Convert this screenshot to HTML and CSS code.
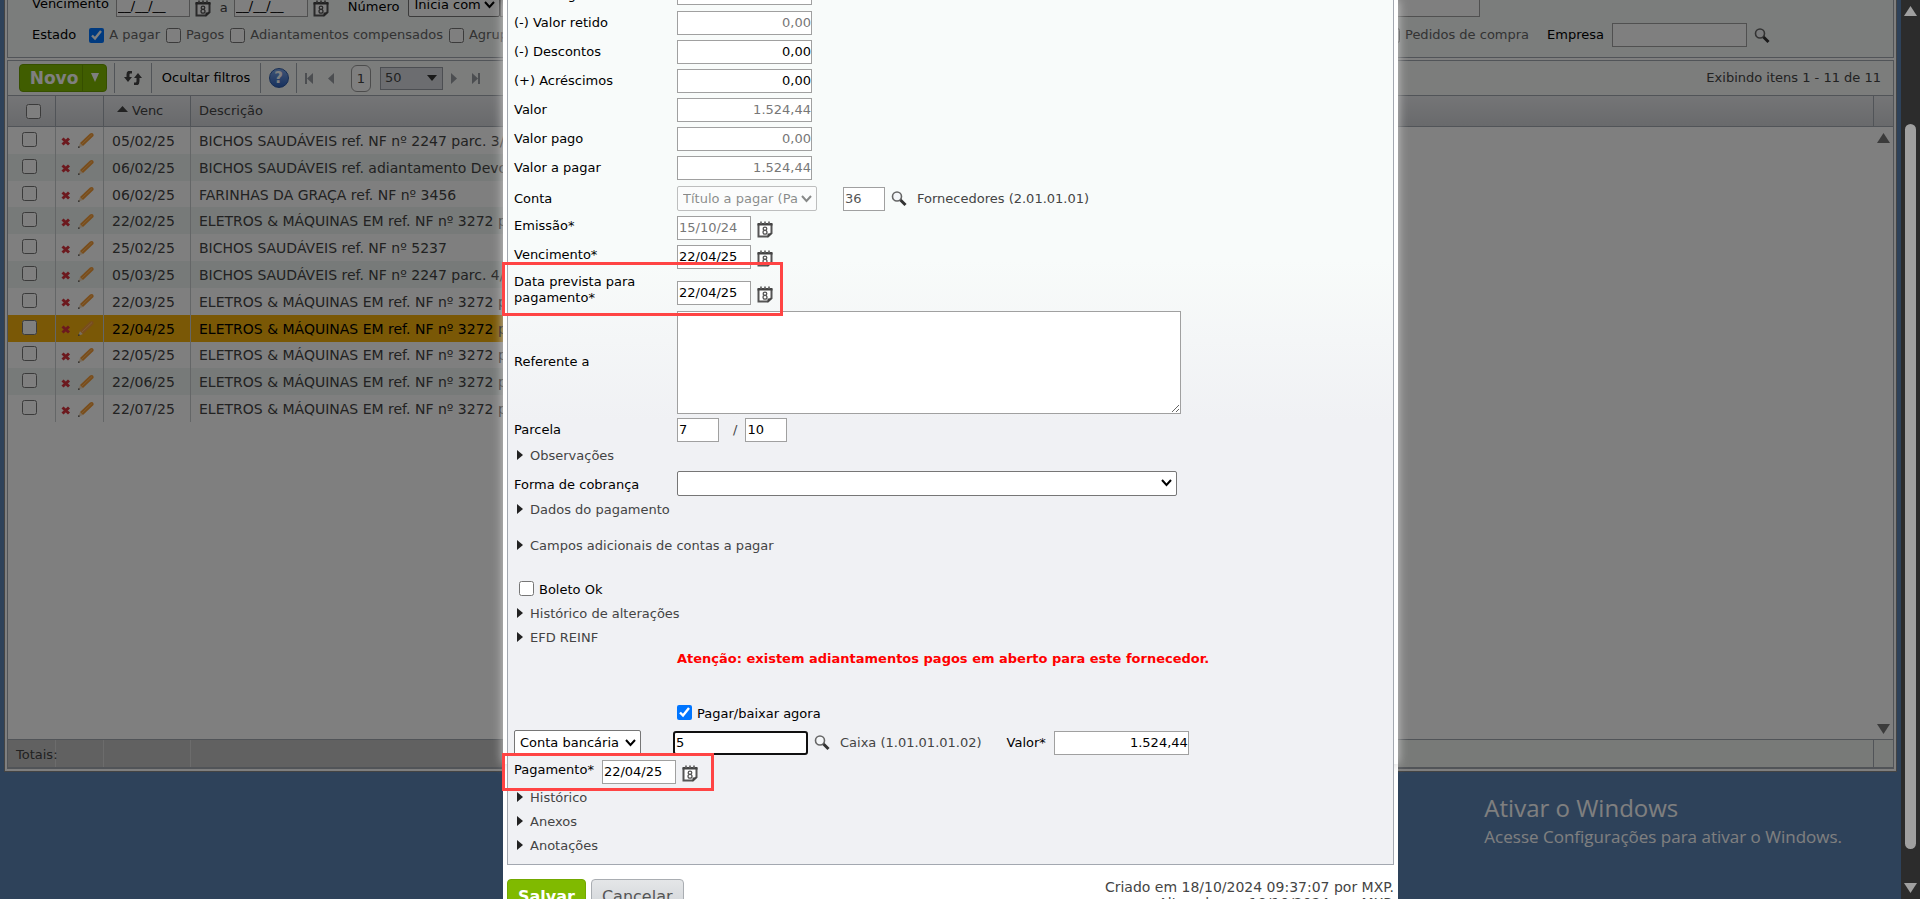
FILE: index.html
```html
<!DOCTYPE html>
<html lang="pt-BR">
<head>
    <meta charset="UTF-8">
    <meta name="viewport" content="width=device-width, initial-scale=1.0">
    <title>Contas a pagar</title>
    <link rel="stylesheet" href="styles.css">
</head>
<body>
    <svg class="sprite" aria-hidden="true">
        <symbol id="calendar" viewBox="0 0 16 17">
            <path d="M1.500 3v12.500h9.500l3.500-3.500V3" fill="#fff" stroke="#555" stroke-width="2"/>
            <path d="M0.500 2h15v2.500h-15zM10.500 16.500v-4h5z" fill="#444"/>
            <path d="M3 0.500h2v2H3zM7 0.500h2v2H7zM11 0.500h2v2h-2z" fill="#777"/>
            <ellipse cx="8" cy="7.700" rx="1.800" ry="1.600" fill="none" stroke="#555" stroke-width="1.300"/>
            <ellipse cx="8" cy="11.300" rx="2" ry="1.900" fill="none" stroke="#555" stroke-width="1.300"/>
        </symbol>
        <symbol id="search" viewBox="0 0 16 16">
            <circle cx="6" cy="6" r="4.500" fill="#f4f6f8" stroke="#666" stroke-width="1.600"/>
            <path d="M9.500 9.500l5 5" stroke="#333" stroke-width="3"/>
        </symbol>
        <symbol id="remove" viewBox="0 0 10 9">
            <path d="M1.500 1.500l6.500 6M8 1.500l-6.500 6" stroke="#d8323c" stroke-width="3"/>
        </symbol>
        <symbol id="pencil" viewBox="0 0 18 17">
            <path d="M1 16l2-5 3 3z" fill="#f0d9bc"/>
            <path class="pencil-body" d="M3 11L13 1.500q2-1 3 0t.5 2.500L6 14z"/>
            <path class="pencil-shine" d="M4.500 12.500L15 2.500" stroke-width="1"/>
            <path d="M1 16l.7-2L3 15.300z" fill="#333"/>
        </symbol>
    </svg>

    <div class="screen">
        <div class="desktop">
            <div class="window">
                <form class="filters">
                    <div class="filter-row">
                        <label for="venc-de">Vencimento</label>
                        <input id="venc-de" class="date" type="text" value="__/__/__">
                        <svg class="icon"><use href="#calendar"/></svg>
                        <span class="between">a</span>
                        <input class="date" type="text" value="__/__/__" aria-label="Vencimento até">
                        <svg class="icon"><use href="#calendar"/></svg>
                        <label for="numero" class="numero">Número</label>
                        <select id="numero" class="select"><option>Inicia com</option></select>
                        <input class="numero-input" type="text" aria-label="Valor do número">
                    </div>
                    <div class="filter-row states">
                        <span class="estado">Estado</span>
                        <input id="a-pagar" type="checkbox" checked><label for="a-pagar">A pagar</label>
                        <input id="pagos" type="checkbox"><label for="pagos">Pagos</label>
                        <input id="adiant" type="checkbox"><label for="adiant">Adiantamentos compensados</label>
                        <input id="agrup" type="checkbox"><label for="agrup">Agrupados</label>
                        <div class="filter-end">
                            <input id="pedidos" type="checkbox"><label for="pedidos">Pedidos de compra</label>
                            <label for="empresa" class="empresa">Empresa</label>
                            <input id="empresa" class="value" type="text">
                            <svg class="icon"><use href="#search"/></svg>
                        </div>
                    </div>
                </form>

                <div class="grid">
                    <div class="toolbar">
                        <div class="new-group">
                            <button class="new-button">Novo</button><button class="new-menu" aria-label="Mais opções"><svg width="8" height="9"><path d="M0 0h8L4 9z" fill="#fff"/></svg></button>
                        </div>
                        <button class="tool refresh" aria-label="Atualizar">
                            <svg width="18" height="14" viewBox="0 0 18 14"><path d="M8 1H6.500Q4 1 4 3.500V7M10 13h1.500Q14 13 14 10V6" fill="none" stroke="#444" stroke-width="3"/><path d="M0 6h8l-4 5zM10 7h8l-4-5z" fill="#444"/></svg>
                        </button>
                        <button class="tool hide-filters">Ocultar filtros</button>
                        <button class="tool help" aria-label="Ajuda"><span class="help-dot">?</span></button>
                        <button class="pager first" aria-label="Primeira"><svg width="9" height="11"><path d="M1 0h2v11H1zM9 0v11L3 5.500z"/></svg></button>
                        <button class="pager" aria-label="Anterior"><svg width="6" height="11"><path d="M6 0v11L0 5.500z"/></svg></button>
                        <span class="page-number">1</span>
                        <select class="page-size" aria-label="Itens por página"><option>50</option></select>
                        <button class="pager" aria-label="Próxima"><svg width="6" height="11"><path d="M0 0v11l6-5.500z"/></svg></button>
                        <button class="pager last" aria-label="Última"><svg width="9" height="11"><path d="M6 0h2v11H6zM0 0v11l6-5.500z"/></svg></button>
                        <span class="showing">Exibindo itens 1 - 11 de 11</span>
                    </div>

                    <div class="table-area">
                        <table class="bills">
                            <thead>
                                <tr>
                                    <th class="col-check"><input type="checkbox" aria-label="Selecionar todos"></th>
                                    <th class="col-actions"></th>
                                    <th class="col-date"><svg class="sort" width="11" height="6"><path d="M5.500 0L11 6H0z" fill="#444"/></svg>Venc</th>
                                    <th class="col-text">Descrição</th>
                                    <th class="col-rest"></th>
                                    <th class="col-end"></th>
                                </tr>
                            </thead>
                            <tbody id="rows"></tbody>
                        </table>
                        <svg class="list-arrow up" width="13" height="10"><path d="M6.500 0L13 10H0z"/></svg>
                        <svg class="list-arrow down" width="13" height="10"><path d="M0 0h13L6.500 10z"/></svg>
                    </div>
                    <div class="totals">
                        <span class="col-check">Totais:</span>
                        <span class="col-actions"></span>
                        <span class="col-date"></span>
                        <span class="col-rest"></span>
                        <span class="col-end"></span>
                    </div>
                </div>
            </div>

            <div class="activation">
                <p class="activation-title">Ativar o Windows</p>
                <p>Acesse Configurações para ativar o Windows.</p>
            </div>

            <div class="overlay">
                <div class="modal">
                    <form class="panel">
                        <div class="row cut">
                            <label for="valor-orig">Valor original</label>
                            <input id="valor-orig" class="value" type="text">
                        </div>
                        <div class="row">
                            <label for="retido">(-) Valor retido</label>
                            <input id="retido" class="value muted" type="text" value="0,00" readonly>
                        </div>
                        <div class="row">
                            <label for="descontos">(-) Descontos</label>
                            <input id="descontos" class="value" type="text" value="0,00">
                        </div>
                        <div class="row">
                            <label for="acrescimos">(+) Acréscimos</label>
                            <input id="acrescimos" class="value" type="text" value="0,00">
                        </div>
                        <div class="row">
                            <label for="valor">Valor</label>
                            <input id="valor" class="value muted" type="text" value="1.524,44" readonly>
                        </div>
                        <div class="row">
                            <label for="pago">Valor pago</label>
                            <input id="pago" class="value muted" type="text" value="0,00" readonly>
                        </div>
                        <div class="row">
                            <label for="a-pagar-valor">Valor a pagar</label>
                            <input id="a-pagar-valor" class="value muted" type="text" value="1.524,44" readonly>
                        </div>
                        <div class="row ledger">
                            <label for="conta">Conta</label>
                            <select id="conta" class="select conta" disabled><option>Título a pagar (Passivo)</option></select>
                            <input class="short muted" type="text" value="36" aria-label="Código da conta" readonly>
                            <svg class="icon"><use href="#search"/></svg>
                            <span class="note">Fornecedores (2.01.01.01)</span>
                        </div>
                        <div class="row dated">
                            <label for="emissao">Emissão*</label>
                            <input id="emissao" class="date muted" type="text" value="15/10/24" readonly>
                            <svg class="icon"><use href="#calendar"/></svg>
                        </div>
                        <div class="row dated">
                            <label for="vencimento">Vencimento*</label>
                            <input id="vencimento" class="date" type="text" value="22/04/25">
                            <svg class="icon"><use href="#calendar"/></svg>
                        </div>
                        <div class="row forecast">
                            <label for="prevista">Data prevista para pagamento*</label>
                            <input id="prevista" class="date" type="text" value="22/04/25">
                            <svg class="icon"><use href="#calendar"/></svg>
                            <span class="mark"></span>
                        </div>
                        <div class="row reference">
                            <label for="referente">Referente a</label>
                            <textarea id="referente"></textarea>
                        </div>
                        <div class="row">
                            <label for="parcela">Parcela</label>
                            <input id="parcela" class="short" type="text" value="7">
                            <span class="slash">/</span>
                            <input class="short" type="text" value="10" aria-label="Total de parcelas">
                        </div>
                        <button type="button" class="toggle">Observações</button>
                        <div class="row billing">
                            <label for="forma">Forma de cobrança</label>
                            <select id="forma" class="select wide"><option></option></select>
                        </div>
                        <button type="button" class="toggle">Dados do pagamento</button>
                        <button type="button" class="toggle spaced">Campos adicionais de contas a pagar</button>
                        <div class="check-row boleto">
                            <input id="boleto" type="checkbox"><label for="boleto">Boleto Ok</label>
                        </div>
                        <button type="button" class="toggle">Histórico de alterações</button>
                        <button type="button" class="toggle">EFD REINF</button>
                        <p class="warning">Atenção: existem adiantamentos pagos em aberto para este fornecedor.</p>
                        <div class="check-row pay-now">
                            <input id="agora" type="checkbox" checked><label for="agora">Pagar/baixar agora</label>
                        </div>
                        <div class="row account">
                            <select class="select bank" aria-label="Origem"><option>Conta bancária</option></select>
                            <input class="value focused" type="text" value="5" aria-label="Conta bancária">
                            <svg class="icon"><use href="#search"/></svg>
                            <span class="note">Caixa (1.01.01.01.02)</span>
                            <label for="valor-pgto" class="inline-label">Valor*</label>
                            <input id="valor-pgto" class="value" type="text" value="1.524,44">
                        </div>
                        <div class="row dated payment">
                            <label for="pagamento" class="inline-label">Pagamento*</label>
                            <input id="pagamento" class="date" type="text" value="22/04/25">
                            <svg class="icon"><use href="#calendar"/></svg>
                            <span class="mark"></span>
                        </div>
                        <button type="button" class="toggle">Histórico</button>
                        <button type="button" class="toggle">Anexos</button>
                        <button type="button" class="toggle">Anotações</button>
                    </form>
                    <div class="modal-footer">
                        <button class="save">Salvar</button>
                        <button class="cancel">Cancelar</button>
                        <p class="created">Criado em 18/10/2024 09:37:07 por MXP.<br>Alterado em 18/10/2024 por MXP.</p>
                    </div>
                </div>
            </div>
        </div>

        <div class="scrollbar">
            <svg width="13" height="10"><path d="M6.500 0L13 10H0z"/></svg>
            <div class="thumb"></div>
            <svg width="13" height="10"><path d="M0 0h13L6.500 10z"/></svg>
        </div>
    </div>

    <script>
        const bills = [
            ['05/02/25', 'BICHOS SAUDÁVEIS ref. NF nº 2247 parc. 3/10'],
            ['06/02/25', 'BICHOS SAUDÁVEIS ref. adiantamento Devolução'],
            ['06/02/25', 'FARINHAS DA GRAÇA ref. NF nº 3456'],
            ['22/02/25', 'ELETROS & MÁQUINAS EM ref. NF nº 3272 parc. 5/10'],
            ['25/02/25', 'BICHOS SAUDÁVEIS ref. NF nº 5237'],
            ['05/03/25', 'BICHOS SAUDÁVEIS ref. NF nº 2247 parc. 4/10'],
            ['22/03/25', 'ELETROS & MÁQUINAS EM ref. NF nº 3272 parc. 6/10'],
            ['22/04/25', 'ELETROS & MÁQUINAS EM ref. NF nº 3272 parc. 7/10'],
            ['22/05/25', 'ELETROS & MÁQUINAS EM ref. NF nº 3272 parc. 8/10'],
            ['22/06/25', 'ELETROS & MÁQUINAS EM ref. NF nº 3272 parc. 9/10'],
            ['22/07/25', 'ELETROS & MÁQUINAS EM ref. NF nº 3272 parc. 10/10']
        ];

        bills.forEach(([date, text], i) => {
            const row = document.createElement('tr');
            if (i === 7) row.className = 'selected';
            row.innerHTML = `
                <td class="col-check"><input type="checkbox" aria-label="Selecionar ${date}"></td>
                <td class="col-actions"><svg class="remove"><use href="#remove"/></svg><svg class="pencil"><use href="#pencil"/></svg></td>
                <td class="col-date">${date}</td>
                <td class="col-text"></td>
                <td class="col-rest"></td>
                <td class="col-end"></td>`;
            row.querySelector('.col-text').textContent = text;
            document.getElementById('rows').appendChild(row);
        });
    </script>
</body>
</html>
```
FILE: styles.css
```css
:root {
    --blue: #5c84b5;
    --line: #a3a8b0;
    --text: #444;
    --green: #80ba00;
}

* {
    margin: 0;
    padding: 0;
    box-sizing: border-box;
}

body {
    font-family: "DejaVu Sans", Verdana, sans-serif;
    font-size: 13px;
    line-height: 16px;
    color: var(--text);
}

button, input, select, textarea {
    font: inherit;
    color: inherit;
}

button {
    background: none;
    border: none;
}

.sprite {
    display: none;
}

.screen {
    display: flex;
    height: 100vh;
    overflow: hidden;
}

.desktop {
    position: relative;
    flex: 1;
    padding: 0 4px;
    background: var(--blue);
    overflow: hidden;
}

.window {
    display: flex;
    flex-direction: column;
    height: 772px;
    padding: 0 2px 2px;
    background: #fff;
    border: 1px solid #888;
    border-top: none;
}

input[type="text"], textarea, .select {
    background: #fff;
    border: 1px solid #a0a0a0;
    color: #000;
}

input[type="text"] {
    height: 24px;
    padding: 0 1px;
}

input[type="checkbox"] {
    width: 15px;
    height: 15px;
}

.value {
    width: 135px;
}

.date {
    width: 74px;
}

.short {
    width: 42px;
}

.icon {
    width: 16px;
    height: 17px;
    flex-shrink: 0;
}

.select {
    height: 25px;
    padding: 0 18px 0 5px;
    border-color: #767676;
    border-radius: 2px;
    appearance: none;
    background: #fff url("data:image/svg+xml,%3Csvg xmlns='http://www.w3.org/2000/svg' width='11' height='8'%3E%3Cpath d='M1 1l4.500 5L10 1' fill='none' stroke='%23000' stroke-width='2'/%3E%3C/svg%3E") no-repeat right 4px center;
}

/* filters */
.filters {
    padding: 0 0 10px 24px;
    background: #f6faf9;
    border: 1px solid var(--line);
    border-top: none;
}

.filter-row {
    display: flex;
    align-items: center;
    height: 16px;
}

.filter-row .between {
    margin: 0 6px 0 9px;
}

.filter-row .date + .icon {
    margin-left: 5px;
}

.filter-row > label:first-child {
    margin: -8px 7px 0 0;
    color: #000;
}

.filter-row .date {
    flex-shrink: 0;
    margin-top: -6px;
}

.filter-row .numero {
    margin: -3px 9px 0 19px;
    color: #000;
}

.numero-input {
    width: 980px;
}

.filter-row .select, .numero-input {
    flex-shrink: 0;
    margin-top: -7px;
}

.filter-row.states {
    height: 24px;
    margin-top: 7px;
    color: #666;
}

.states input[type="checkbox"] {
    flex-shrink: 0;
    margin-right: 5px;
}

.states label {
    margin-right: 6px;
}

.states .estado {
    margin-right: 13px;
    color: #000;
}

.filter-end {
    display: flex;
    align-items: center;
    margin: 0 123px 0 auto;
}

.filter-end .empresa {
    margin: 0 8px 0 12px;
    color: #000;
}

.filter-end .icon {
    margin-left: 7px;
}

/* list */
.grid {
    display: flex;
    flex-direction: column;
    flex: 1;
    margin-top: 2px;
    border: 1px solid var(--line);
    border-bottom-width: 2px;
}

.toolbar {
    display: flex;
    align-items: center;
    height: 34px;
    padding-right: 12px;
    background: #f8faf9;
}

.new-group {
    display: flex;
    height: 28px;
    margin: 0 7px 0 11px;
    border: 1px solid #6d9f00;
    border-radius: 4px;
    background: var(--green);
}

.new-button {
    width: 63px;
    padding-left: 6px;
    color: #fff;
    font-size: 17px;
    font-weight: bold;
    border-right: 1px solid #6d9f00;
}

.new-menu {
    width: 23px;
}

.tool {
    height: 30px;
    color: #000;
    border-left: 1px solid var(--line);
}

.refresh {
    width: 37px;
    padding-top: 3px;
}

.hide-filters {
    width: 109px;
}

.help {
    width: 36px;
}

.help-dot {
    display: block;
    width: 20px;
    height: 20px;
    margin: 0 auto;
    border: 1px solid #2c5aa8;
    border-radius: 50%;
    background: linear-gradient(#7ea8ea, #2f62bd);
    color: #fff;
    font-size: 15px;
    font-weight: bold;
    line-height: 18px;
}

.pager {
    display: flex;
    margin-right: 15px;
    fill: #999da3;
}

.pager.first {
    height: 30px;
    padding-left: 7px;
    align-items: center;
    border-left: 1px solid var(--line);
}

.page-number {
    width: 20px;
    height: 27px;
    margin: 0 9px 0 2px;
    border: 1px solid #999;
    border-radius: 6px;
    background: #fff;
    line-height: 25px;
    text-align: center;
}

.page-size {
    width: 63px;
    height: 23px;
    margin-right: 8px;
    padding-left: 4px;
    appearance: none;
    border: 1px solid #999da5;
    background: #d8dbe0 url("data:image/svg+xml,%3Csvg xmlns='http://www.w3.org/2000/svg' width='10' height='6'%3E%3Cpath d='M0 0h10L5 6z' fill='%23333'/%3E%3C/svg%3E") no-repeat right 5px center;
}

.showing {
    margin-left: auto;
}

.table-area {
    position: relative;
    flex: 1;
    background: #fff;
}

.bills {
    width: 100%;
    height: 327px;
    table-layout: fixed;
    border-collapse: separate;
    border-spacing: 0;
}

.bills th {
    height: 32px;
    padding-left: 8px;
    background: linear-gradient(#eaebee, #d2d4d8);
    border: solid var(--line);
    border-width: 1px 1px 1px 0;
    font-weight: normal;
    text-align: left;
}

.bills td {
    padding: 1px 0 0 8px;
    border-right: 1px solid #c8cccf;
    font-size: 14px;
    white-space: nowrap;
    overflow: hidden;
}

.bills .col-check, .totals .col-check {
    width: 48px;
}

.bills .col-check {
    padding: 0 0 0 4px;
    text-align: center;
    line-height: 0;
}

.bills td.col-check {
    padding: 0 5px 2px 0;
}

.bills .col-actions, .totals .col-actions {
    width: 48px;
}

.bills td.col-actions {
    padding-left: 5px;
    line-height: 0;
}

.bills .col-date, .totals .col-date {
    width: 87px;
}

.bills th.col-date {
    padding-left: 13px;
}

.bills .col-text {
    width: 600px;
    border-right: none;
}

.bills .col-end, .totals .col-end {
    width: 19px;
    border-right: none;
}

.bills td.col-rest, .bills td.col-end {
    background: #fff;
    border: none;
}

.sort {
    margin: 0 4px 3px 0;
}

.bills tbody tr:nth-child(even) {
    background: #eef4f2;
}

.bills tbody tr.selected {
    background: #f5b10d;
    color: #000;
}

.remove {
    width: 10px;
    height: 9px;
    margin: 0 6px 3px 0;
}

.pencil {
    width: 18px;
    height: 17px;
}

.pencil-body {
    fill: #f29b38;
}

.pencil-shine {
    stroke: #ffbd68;
}

.selected .pencil-body {
    fill: #c9783a;
}

.selected .pencil-shine {
    stroke: #e0955a;
}

.list-arrow {
    position: absolute;
    right: 3px;
    fill: #777;
}

.list-arrow.up {
    top: 38px;
}

.list-arrow.down {
    bottom: 5px;
}

.totals {
    display: flex;
    height: 28px;
    border-top: 1px solid var(--line);
    background: linear-gradient(90deg, #c2c2c2 50%, #f0f4f1 50%);
    line-height: 30px;
    white-space: nowrap;
}

.totals span {
    border-right: 1px solid #d8d8d8;
}

.totals .col-check {
    padding-left: 8px;
}

.totals .col-rest {
    flex: 1;
    border-color: var(--line);
}

.activation {
    position: absolute;
    right: 59px;
    bottom: 50px;
    color: #fff;
    font-family: "Open Sans", sans-serif;
    font-size: 17px;
    line-height: 24px;
}

.activation-title {
    font-size: 24px;
    line-height: 34px;
}

/* modal */
.overlay {
    position: absolute;
    inset: 0;
    display: flex;
    justify-content: center;
    align-items: flex-start;
    background: rgba(0, 0, 0, 0.5);
}

.modal {
    position: relative;
    z-index: 1;
    width: 895px;
    padding: 0 4px 16px;
    background: #fff;
}

/* glow only beside the window behind */
.modal::before {
    content: "";
    position: absolute;
    z-index: -1;
    inset: 0 0 auto;
    height: 764px;
    box-shadow: 0 0 10px #ccc;
}

.panel {
    height: 865px;
    padding: 0 6px;
    border: 1px solid var(--line);
    border-top: none;
    background: linear-gradient(#f8fbfa 0, #f8fbfa 260px, #f0f1f4 420px);
}

.row {
    position: relative;
    display: flex;
    align-items: center;
    height: 29px;
}

.row.cut {
    height: 8px;
    align-items: flex-end;
    padding-bottom: 3px;
}

.row > label:first-child {
    width: 163px;
    padding-right: 20px;
}

.row.cut > label {
    padding-bottom: 2px;
}

.row label, .check-row label {
    color: #000;
}

.row .value {
    text-align: right;
    padding: 0;
}

.row .muted {
    color: #777;
}

.row.ledger {
    margin-top: 2px;
}

.ledger .short {
    color: #555;
}

.conta {
    width: 140px;
    margin-right: 26px;
}

.conta:disabled {
    opacity: 0.45;
}

.row .icon {
    margin-left: 6px;
}

.note {
    margin-left: 10px;
}

.dated > label {
    padding-bottom: 4px;
}

.row .date + .icon {
    margin-top: 3px;
}

.mark {
    position: absolute;
    z-index: 1;
    border: 3px solid #ff4444;
}

.row.forecast {
    height: 38px;
}

.forecast .date {
    margin-top: 5px;
}

.forecast .date + .icon {
    margin-top: 9px;
}

.forecast .mark {
    left: -12px;
    top: -9px;
    width: 281px;
    height: 54px;
}

.row.reference {
    height: 106px;
}

textarea {
    width: 504px;
    height: 103px;
    resize: both;
}

.slash {
    margin: 0 8px 0 14px;
}

.toggle {
    display: flex;
    align-items: center;
    height: 24px;
}

.toggle::before {
    content: "";
    margin: 0 7px 2px 3px;
    border: solid transparent;
    border-width: 5px 0 5px 6px;
    border-left-color: #222;
}

.toggle.spaced {
    margin: 12px 0;
}

.row.billing {
    height: 30px;
}

.billing > label {
    padding-top: 3px;
}

.wide {
    width: 500px;
}

.check-row {
    display: flex;
    align-items: center;
    gap: 5px;
    height: 24px;
}

.check-row label {
    padding-top: 4px;
}

.boleto {
    margin: 18px 0 2px 5px;
}

.warning {
    margin: 1px 0 0 163px;
    color: #f00;
    font-weight: bold;
}

.pay-now {
    margin: 33px 0 4px 163px;
}

.bank {
    width: 127px;
    margin-right: 32px;
}

.row .focused {
    padding-left: 1px;
    border: 2px solid #101010;
    border-radius: 3px;
    text-align: left;
}

.row > label.inline-label {
    width: auto;
    margin-left: 25px;
    padding-right: 8px;
}

.row.payment > label.inline-label {
    margin-left: 0;
}

.payment .mark {
    left: -12px;
    top: -4px;
    width: 212px;
    height: 38px;
}

.modal-footer {
    display: flex;
    gap: 5px;
    margin-top: 14px;
}

.save, .cancel {
    height: 36px;
    padding: 0 10px;
    border: 1px solid #73a800;
    border-radius: 4px;
    background: var(--green);
    color: #fff;
    font-size: 16px;
    font-weight: bold;
}

.cancel {
    border-color: #a9adb2;
    background: linear-gradient(#e4e6e8, #cfd2d6);
    color: #555;
    font-weight: normal;
}

.created {
    margin-left: auto;
    font-size: 14px;
    text-align: right;
}

/* window scrollbar */
.scrollbar {
    display: flex;
    flex-direction: column;
    align-items: center;
    width: 19px;
    padding: 6px 0;
    background: #2c2c2c;
    fill: #a0a0a0;
}

.thumb {
    width: 11px;
    flex: 1;
    margin: 108px 0 34px;
    border-radius: 6px;
    background: #a0a0a0;
}
```
